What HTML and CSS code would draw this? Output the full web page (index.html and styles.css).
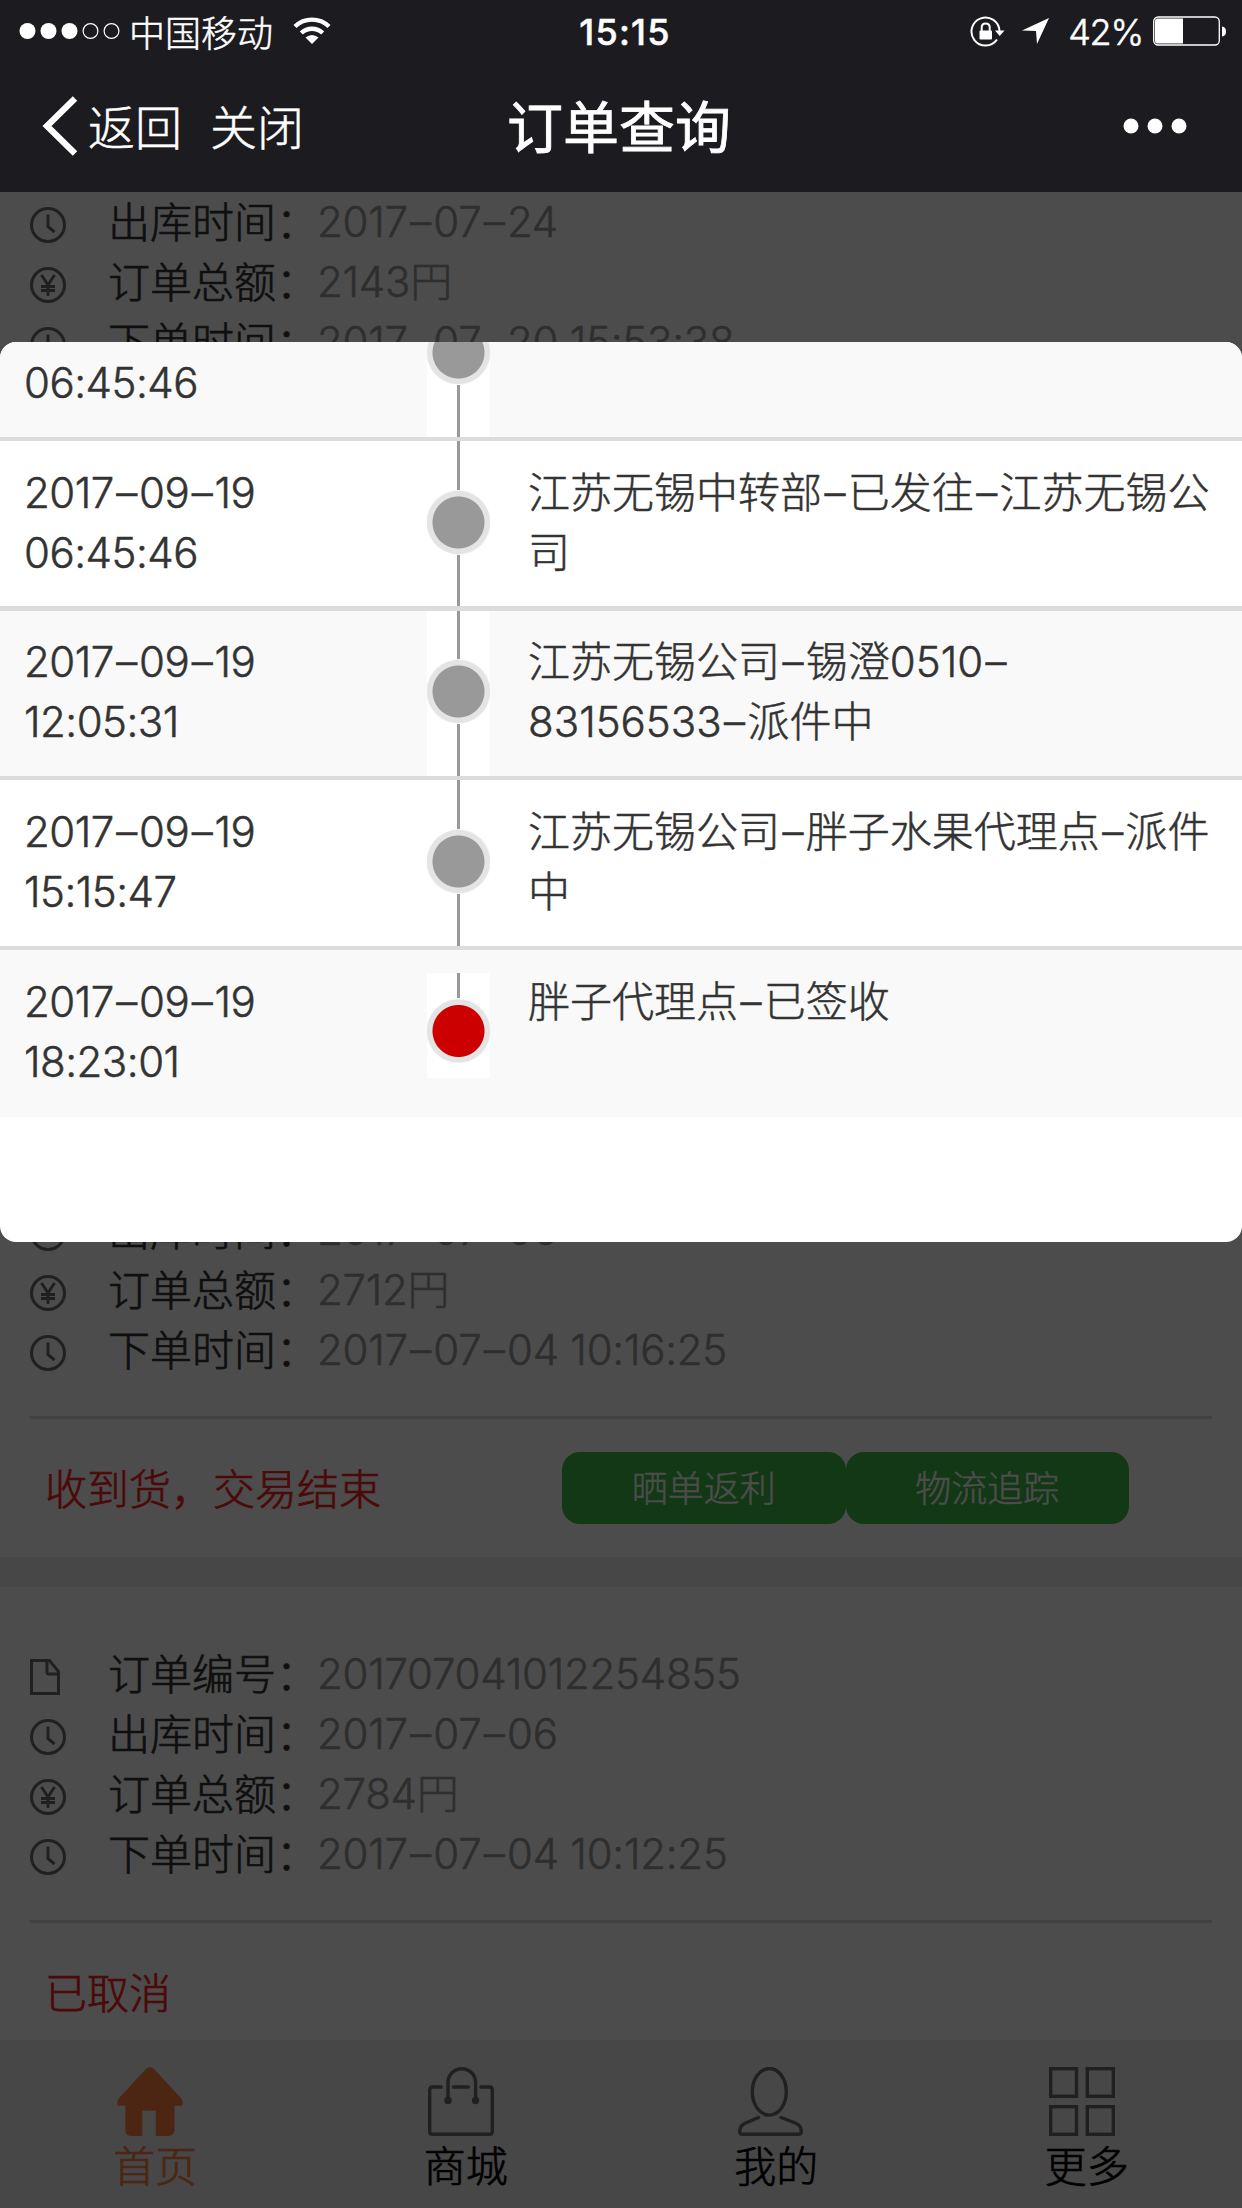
FILE: index.html
```html
<!DOCTYPE html>
<html lang="zh-CN">
<head>
<meta charset="utf-8">
<title>订单查询</title>
<link rel="stylesheet" href="styles.css">
</head>
<body>
<svg width="0" height="0" class="defs">
  <symbol id="clock" viewBox="0 0 36 36"><circle cx="18" cy="18" r="16.5"/><path d="M18 7.500V19.500L24.500 25"/></symbol>
  <symbol id="yen" viewBox="0 0 36 36"><circle cx="18" cy="18" r="16.500"/><path class="thin" d="M11.500 8L18 18L24.500 8M18 18V29M11 19.500H25M11 23.500H25"/></symbol>
  <symbol id="doc" viewBox="0 0 36 36"><path d="M1.500 1.500H19.500L28.500 12.500V34.500H1.500ZM17 1.500V13.500Q17 15 18.500 15H28.500"/></symbol>
</svg>
<div class="phone">
  <header class="top">
    <div class="status">
      <div class="status-left">
        <svg width="104" height="18" viewBox="0 0 104 18" fill="#fff"><circle cx="8.500" cy="9" r="8"/><circle cx="29.500" cy="9" r="8"/><circle cx="50.500" cy="9" r="8"/><g fill="none" stroke="#fff" stroke-width="1.200"><circle cx="71.500" cy="9" r="7.400"/><circle cx="92.500" cy="9" r="7.400"/></g></svg>
        <span class="carrier">中国移动</span>
        <svg class="wifi" width="38" height="28" viewBox="0 0 38 28" fill="none" stroke="#fff" stroke-width="4.400"><path d="M2 9.500A24.500 24.500 0 0 1 36 9.500"/><path d="M8.300 16A15.500 15.500 0 0 1 29.700 16"/><path stroke="none" fill="#fff" d="M19 27L12.500 20.500Q19 15.500 25.500 20.500Z"/></svg>
      </div>
      <span class="time">15:15</span>
      <div class="status-right">
        <svg width="35" height="31" viewBox="0 0 35 31" fill="none" stroke="#fff" stroke-width="2"><path d="M29.500 15A14 14 0 1 0 27 23.500"/><path stroke="none" fill="#fff" d="M25 14.500H34.500L29.700 20Z"/><rect x="9.500" y="14.500" width="12.500" height="9" rx="1" fill="#fff" stroke="none"/><path d="M11.700 15V11.500Q11.700 7.500 15.700 7.500T19.700 11.500V15"/></svg>
        <svg class="arrow" width="28" height="28" viewBox="0 0 28 28" fill="#fff"><path d="M27 1L0 13.500L14 14L15 27Z"/></svg>
        <span class="percent">42%</span>
        <svg class="battery" width="74" height="30" viewBox="0 0 74 30"><rect x="0.700" y="1" width="65.600" height="28" rx="4.500" fill="none" stroke="#fff" stroke-width="1.300"/><path fill="#fff" d="M4 2.500H30V27.500H4Q2 27.500 2 25V5Q2 2.500 4 2.500ZM69 10.500Q73 11 73 15.500T69 20.500Z"/></svg>
      </div>
    </div>
    <nav class="nav">
      <div class="nav-left">
        <svg width="36" height="60" viewBox="0 0 36 60" fill="none" stroke="#fff" stroke-width="6.300"><path d="M33 2.500L5 30L33 57.500"/></svg>
        <span class="back">返回</span><span>关闭</span>
      </div>
      <h1>订单查询</h1>
      <svg class="dots" width="64" height="16" viewBox="0 0 64 16" fill="#fff"><circle cx="8" cy="8" r="7.500"/><circle cx="32" cy="8" r="7.500"/><circle cx="56" cy="8" r="7.500"/></svg>
    </nav>
  </header>

  <main class="orders">
    <section class="order order-first">
      <div class="row"><svg><use href="#clock"/></svg><b>出库时间：</b><span>2017<i>–</i>07<i>–</i>24</span></div>
      <div class="row"><svg><use href="#yen"/></svg><b>订单总额：</b><span>2143円</span></div>
      <div class="row"><svg><use href="#clock"/></svg><b>下单时间：</b><span>2017<i>–</i>07<i>–</i>20 15:53:38</span></div>
    </section>
    <section class="order">
      <div class="row"><svg><use href="#clock"/></svg><b>出库时间：</b><span>2017<i>–</i>07<i>–</i>06</span></div>
      <div class="row"><svg><use href="#yen"/></svg><b>订单总额：</b><span>2712円</span></div>
      <div class="row"><svg><use href="#clock"/></svg><b>下单时间：</b><span>2017<i>–</i>07<i>–</i>04 10:16:25</span></div>
      <div class="state"><em>收到货，交易结束</em><div class="actions"><button>晒单返利</button><button>物流追踪</button></div></div>
    </section>
    <div class="band"></div>
    <section class="order order-last">
      <div class="row"><svg><use href="#doc"/></svg><b>订单编号：</b><span>201707041012254855</span></div>
      <div class="row"><svg><use href="#clock"/></svg><b>出库时间：</b><span>2017<i>–</i>07<i>–</i>06</span></div>
      <div class="row"><svg><use href="#yen"/></svg><b>订单总额：</b><span>2784円</span></div>
      <div class="row"><svg><use href="#clock"/></svg><b>下单时间：</b><span>2017<i>–</i>07<i>–</i>04 10:12:25</span></div>
      <div class="state"><em>已取消</em></div>
    </section>
  </main>

  <footer class="tabs">
    <a class="tab active"><svg viewBox="0 0 66 69"><path fill="#ff8040" d="M29 2Q33-2 37 2L64 31Q67 35 65 38.700H57.500V62Q57.500 69 51 69H38.800V43.700H25.300V69H14Q8.300 69 8.300 62V38.700H1Q-1 35 2 31Z"/></svg>首页</a>
    <a class="tab"><svg class="line" viewBox="0 0 66 69"><path d="M13.200 20H4.500Q1.700 20 1.700 23V64.500Q1.700 67.300 4.500 67.300H61.500Q64.300 67.300 64.300 64.500V23Q64.300 20 61.500 20H53M25.400 20H40.400M20 33V15.500A13.800 13.800 0 0 1 47.600 15.500V33"/><circle cx="20" cy="33.500" r="2"/><circle cx="47.600" cy="33.500" r="2"/></svg>商城</a>
    <a class="tab"><svg class="line" viewBox="0 0 66 69"><ellipse cx="31.300" cy="24.800" rx="17" ry="23.300"/><path d="M20.500 50.500L6.500 56.500Q1.700 59 1.700 64.500Q1.700 67.300 4.500 67.300H60.500Q63.300 67.300 63.300 64.500Q63.300 59 58.500 56.500L43 50.500"/></svg>我的</a>
    <a class="tab"><svg class="line" viewBox="0 0 66 69"><rect x="1.700" y="1.700" width="25.800" height="27.600"/><rect x="38.300" y="1.700" width="26" height="27.600"/><rect x="1.700" y="39.700" width="25.800" height="27.600"/><rect x="38.300" y="39.700" width="26" height="27.600"/></svg>更多</a>
  </footer>

  <div class="mask"></div>
  <div class="modal">
    <div class="event event-cut"><time><br>06:45:46</time><div class="track"></div><p></p></div>
    <div class="event"><time>2017<i>–</i>09<i>–</i>19<br>06:45:46</time><div class="track"></div><p>江苏无锡中转部<i>–</i>已发往<i>–</i>江苏无锡公<br>司</p></div>
    <div class="event thick"><time>2017<i>–</i>09<i>–</i>19<br>12:05:31</time><div class="track"></div><p>江苏无锡公司<i>–</i>锡澄0510<i>–</i><br>83156533<i>–</i>派件中</p></div>
    <div class="event"><time>2017<i>–</i>09<i>–</i>19<br>15:15:47</time><div class="track"></div><p>江苏无锡公司<i>–</i>胖子水果代理点<i>–</i>派件<br>中</p></div>
    <div class="event"><time>2017<i>–</i>09<i>–</i>19<br>18:23:01</time><div class="track track-end"></div><p>胖子代理点<i>–</i>已签收</p></div>
  </div>
</div>
</body>
</html>
```
FILE: styles.css
```css
* { box-sizing: border-box; margin: 0; padding: 0; }
body { background: #fff; font-family: Inter, "Noto Sans CJK SC", sans-serif; font-size: 42px; font-weight: 300; color: #333; -webkit-text-stroke: 0.5px; }
svg { display: block; flex: none; }
i { font-style: normal; padding: 0 2.400px; }
.defs { position: absolute; }
.phone { position: relative; width: 1242px; height: 2208px; overflow: hidden; display: flex; flex-direction: column; }

.top { position: relative; z-index: 2; flex: none; height: 192px; background: #1c1b20; color: #fff; }
.status { display: grid; grid-template-columns: 1fr auto 1fr; align-items: center; height: 60px; padding: 0 15px 0 19px; }
.status-left, .status-right { display: flex; align-items: center; }
.status-right { justify-content: flex-end; }
.carrier { margin-left: 6px; font-size: 36px; line-height: 60px; font-family: "Noto Sans CJK SC", sans-serif; }
.wifi { margin-left: 20px; }
.time { padding: 2px 0 0 4px; font-size: 36px; font-weight: 500; letter-spacing: 1.200px; line-height: 60px; }
.arrow { margin-left: 17px; }
.percent { margin-left: 18px; padding-top: 2px; font-size: 36px; letter-spacing: -1.200px; line-height: 60px; }
.battery { margin-left: 10px; }
.nav { display: grid; grid-template-columns: 1fr auto 1fr; align-items: center; height: 132px; padding: 0 55px 0 42px; font: 300 47px/130px "Noto Sans CJK SC", sans-serif; }
.nav-left { display: flex; align-items: center; }
.nav-left span { padding-bottom: 2px; }
.nav-left .back { margin: 0 28px 0 10px; }
.nav h1 { padding: 0 0 4px 9px; font-size: 56px; font-weight: 400; line-height: 128px; -webkit-text-stroke: 0.8px; }
.dots { justify-self: end; }

.orders { flex: none; height: 1848px; overflow: hidden; }
.order-first { height: 1008px; }
.order-last { padding-top: 57px; }
.row { display: flex; align-items: center; height: 60px; padding-left: 30px; line-height: 60px; white-space: nowrap; }
.row svg { width: 36px; height: 36px; margin-top: 6px; fill: none; stroke: #6b6b6b; stroke-width: 3; }
.row .thin { stroke-width: 2.200; }
.row b { width: 210px; margin: -4px -1px 0 42px; font-weight: 300; font-family: "Noto Sans CJK SC", sans-serif; -webkit-text-stroke: 0.7px; }
.row span { color: #999; letter-spacing: -0.250px; }
.state { display: flex; align-items: center; height: 141px; margin: 36px 30px 0; padding: 0 83px 0 15px; border-top: 3px solid #dcdcdc; }
.state em { padding-bottom: 4px; font-style: normal; font-family: "Noto Sans CJK SC", sans-serif; color: #fa1e1e; font-weight: 300; -webkit-text-stroke: 0.7px; }
.actions { display: flex; margin-left: auto; }
button { width: 283.500px; height: 72px; padding-bottom: 4px; border: 0; border-radius: 18px; background: #3cbb46; color: #fff; font: 300 36px/68px "Noto Sans CJK SC", sans-serif; -webkit-text-stroke: 0.4px; }
.band { height: 30px; background: #ededed; }

.tabs { display: grid; grid-template-columns: repeat(4, 1fr); height: 168px; background: #ededed; color: #000; }
.tab { display: flex; flex-direction: column; align-items: center; padding-top: 27px; font: 300 42px/56px "Noto Sans CJK SC", sans-serif; -webkit-text-stroke: 0.7px; }
.tab svg { width: 66px; height: 69px; margin-right: 10px; }
.active { color: #ff8040; }
.line { fill: none; stroke: #6b6b6b; stroke-width: 3.400; stroke-linecap: round; }

.mask { position: absolute; inset: 192px 0 0; background: rgba(0, 0, 0, .7); }
.modal { position: absolute; inset: 342px 0 auto; height: 900px; overflow: hidden; border-radius: 16px; background: #fff; display: flex; flex-direction: column; }
.event { flex: none; display: grid; grid-template-columns: 403px 63px 1fr; height: 170px; padding-left: 24px; border-top: 4px solid #dcdcdc; line-height: 60px; white-space: nowrap; }
.event:nth-child(odd) { background: #f9f9f9; }
.event:nth-child(2) { height: 169px; }
.event:last-child { height: 171px; }
.event.thick { border-top-width: 5px; }
.event-cut { margin-top: -75px; }
.event time, .event p { padding-top: 22px; }
.event.thick time, .event.thick p { padding-top: 21px; }
.event time { letter-spacing: -0.500px; }
.event p { padding-left: 38px; }
.track { background: radial-gradient(circle at 31.500px 81.500px, #999 25.500px, #e4e4e4 26.500px 31px, #fff 32.500px, transparent 33px), linear-gradient(90deg, #fff 29.500px, #999 30px 33px, #fff 33.500px); }
.thick .track { background-position: 0 -1px; }
.track-end { height: 105px; margin-top: 23px; background: radial-gradient(circle at 31.500px 58px, #c00 25.500px, #e4e4e4 26.500px 31px, #fff 32.500px, transparent 33px), linear-gradient(90deg, #fff 29.500px, #999 30px 33px, #fff 33.500px) 0 0 / 63px 40px no-repeat #fff; }
```
